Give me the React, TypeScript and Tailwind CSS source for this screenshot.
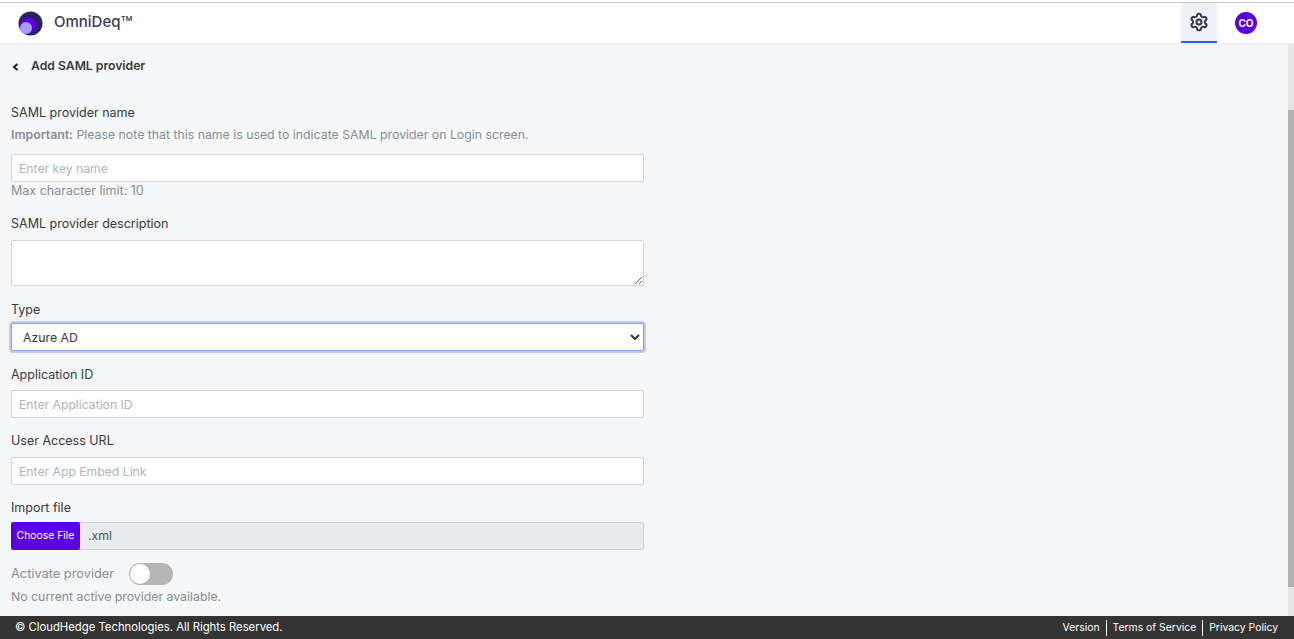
import React from "react";
import { Settings } from "lucide-react";

const labelCls = "block text-[12.5px] leading-[20px] text-[#343a40]";
const hintCls = "text-[12.3px] text-[#868e96]";
const inputCls =
  "block w-full h-[28px] rounded-[2px] border border-[#ced4da] bg-white px-[7px] text-[12.2px] text-[#495057] placeholder:text-[#adb5bd] outline-none";

function Logo() {
  return (
    <svg width="25" height="25" viewBox="0 0 25 25">
      <circle cx="12.5" cy="12.5" r="12" fill="#2b2450" />
      <circle cx="10.5" cy="14.5" r="8.5" fill="#5a00e6" />
      <circle cx="8" cy="17" r="6" fill="#a79cf5" />
    </svg>
  );
}

function Header() {
  return (
    <header className="flex h-[40px] items-center justify-between bg-white pl-[18px] pr-[37px]">
      <div className="flex items-center gap-[11px]">
        <Logo />
        <span className="flex items-start text-[15px] leading-[20px] font-medium text-[#3b3a5c]">
          OmniDeq<span className="mt-[2px] text-[20px] leading-[20px] font-normal">™</span>
        </span>
      </div>
      <div className="flex h-full items-center gap-[18px]">
        <div className="flex h-full w-[36px] items-center justify-center border-b-2 border-[#2563eb] bg-[#eef1f9]">
          <Settings className="h-[20px] w-[20px] text-[#343a40]" strokeWidth={2.4} />
        </div>
        <div className="flex h-[22px] w-[22px] items-center justify-center rounded-full bg-[#5a00e6] text-[10px] font-bold text-white">
          CO
        </div>
      </div>
    </header>
  );
}

function Footer() {
  return (
    <footer className="flex h-[23px] items-center justify-between bg-[#343434] pl-[15px] pr-[16px] text-white">
      <span className="text-[11.3px]">© CloudHedge Technologies. All Rights Reserved.</span>
      <div className="flex items-center text-[10.4px]">
        <span className="border-r border-white pr-[6px] leading-[16px]">Version</span>
        <span className="border-r border-white px-[6px] leading-[16px]">Terms of Service</span>
        <span className="pl-[6px] leading-[16px]">Privacy Policy</span>
      </div>
    </footer>
  );
}

function Scrollbar() {
  return (
    <div className="flex w-[6px] flex-col bg-[#e6e6e6]">
      <div className="h-[65px]" />
      <div className="h-[477px] bg-[#b0b0b0]" />
    </div>
  );
}

export default function App() {
  return (
    <div className="flex h-[639px] flex-col overflow-hidden bg-white font-['Inter','Noto_Sans',sans-serif]">
      <div className="h-[3px] border-b border-[#c8c8c8]" />
      <Header />
      <div className="flex min-h-0 flex-1 border-t-2 border-[#efefef] bg-[#f6f7f9]">
        <main className="min-w-0 flex-1 pl-[11px]">
          <div className="flex h-[43px] items-center gap-[12px] text-[12.2px] font-semibold text-[#343a40]">
            <svg width="7" height="8" viewBox="0 0 7 8" className="ml-px">
              <polyline points="5.5,1 2,4 5.5,7" fill="none" stroke="#212529" strokeWidth="2" />
            </svg>
            <span>Add SAML provider</span>
          </div>
          <form className="mt-[15px] w-[633px]">
            <label className={labelCls}>SAML provider name</label>
            <p className={`mt-[2px] leading-[20px] ${hintCls}`}>
              <b className="font-semibold">Important:</b> Please note that this name is used to indicate SAML provider on Login screen.
            </p>
            <input className={`${inputCls} mt-[9px]`} placeholder="Enter key name" />
            <p className="text-[12.5px] leading-[18px] text-[#868e96]">Max character limit: 10</p>
            <label className={`${labelCls} mt-[14px]`}>SAML provider description</label>
            <textarea className="mt-[6px] block h-[46px] w-full rounded-[2px] border border-[#ced4da] bg-white outline-none" />
            <label className={`${labelCls} mt-[14px]`}>Type</label>
            <select
              defaultValue="azure"
              className="mt-[3px] block h-[28px] w-full rounded-[2px] border border-[#80a0f0] bg-white px-[7px] text-[12.3px] text-[#343a40] shadow-[0_0_0_2px_#c5c8fb] outline-none"
            >
              <option value="azure">Azure AD</option>
            </select>
            <label className={`${labelCls} mt-[14px]`}>Application ID</label>
            <input className={`${inputCls} mt-[5px]`} placeholder="Enter Application ID" />
            <label className={`${labelCls} mt-[13px]`}>User Access URL</label>
            <input className={`${inputCls} mt-[6px]`} placeholder="Enter App Embed Link" />
            <label className={`${labelCls} mt-[13px]`}>Import file</label>
            <div className="mt-[4px] flex h-[28px] items-stretch rounded-[2px] border border-[#ced4da] bg-[#e9ecef]">
              <button type="button" className="-my-px -ml-px w-[69px] rounded-[2px] bg-[#5a00e6] text-[10.4px] text-white">
                Choose File
              </button>
              <span className="self-center pl-[8px] text-[12.3px] text-[#495057]">.xml</span>
            </div>
            <div className="mt-[13px] flex items-center gap-[15px]">
              <span className="text-[12.8px] text-[#868e96]">Activate provider</span>
              <div className="flex h-[22px] w-[44px] items-center rounded-full bg-[#b5b5b5] pl-[1px]">
                <div className="h-[20px] w-[20px] rounded-full bg-white" />
              </div>
            </div>
            <p className={`mt-[3px] leading-[18px] ${hintCls}`}>No current active provider available.</p>
          </form>
        </main>
        <Scrollbar />
      </div>
      <Footer />
    </div>
  );
}
